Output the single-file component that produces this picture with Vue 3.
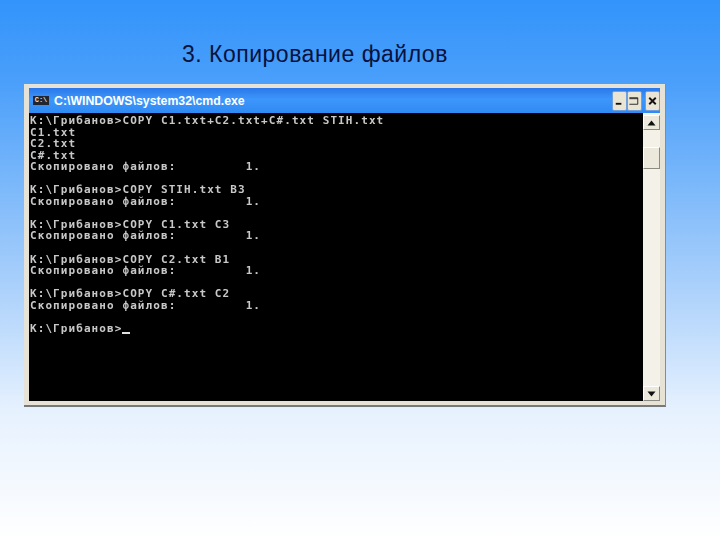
<script setup>
const prompt = 'K:\\Грибанов>'
const done = 'Скопировано файлов:         1.'
const lines = [
  prompt + 'COPY C1.txt+C2.txt+C#.txt STIH.txt',
  'C1.txt', 'C2.txt', 'C#.txt', done, '',
  prompt + 'COPY STIH.txt B3', done, '',
  prompt + 'COPY C1.txt C3', done, '',
  prompt + 'COPY C2.txt B1', done, '',
  prompt + 'COPY C#.txt C2', done, '',
]
</script>

<template>
  <div class="slide">
    <h1 class="heading">3. Копирование файлов</h1>
    <div class="window">
      <div class="titlebar">
        <span class="appicon">C:\</span>
        <span class="wintitle">C:\WINDOWS\system32\cmd.exe</span>
        <div class="controls">
          <button class="ctl">
            <svg width="14" height="14" viewBox="0 0 14 14"><rect x="3" y="9" width="6" height="2" fill="#111" /></svg>
          </button>
          <button class="ctl">
            <svg width="14" height="14" viewBox="0 0 14 14"><path d="M1.5 3.5H10.5V10.5H1.5M1.5 4.5H10.5" fill="none" stroke="#222" stroke-width="1" /></svg>
          </button>
          <button class="ctl close">
            <svg width="14" height="14" viewBox="0 0 14 14"><path d="M3.5 3.5L10.5 10.5M10.5 3.5L3.5 10.5" fill="none" stroke="#111" stroke-width="2" /></svg>
          </button>
        </div>
      </div>
      <div class="client">
        <pre class="console"><template v-for="(l, i) in lines" :key="i">{{ l }}
</template>{{ prompt }}<span class="cursor"></span></pre>
        <div class="scrollbar">
          <div class="arrow">
            <svg width="9" height="6" viewBox="0 0 9 6"><path d="M4.5 0.5L8.5 5.5H0.5Z" fill="#111" /></svg>
          </div>
          <div class="track">
            <div class="thumb"></div>
          </div>
          <div class="arrow">
            <svg width="9" height="6" viewBox="0 0 9 6"><path d="M4.5 5.5L8.5 0.5H0.5Z" fill="#111" /></svg>
          </div>
        </div>
      </div>
    </div>
  </div>
</template>

<style>
html, body { margin: 0; padding: 0; }
</style>

<style scoped>
.slide {
  width: 720px;
  height: 540px;
  box-sizing: border-box;
  overflow: hidden;
  padding: 41px 54px 0 24px;
  background: linear-gradient(180deg, #3394fb 0%, #4a9ffa 15%, #a8cffb 52%, #e6f1fe 76%, #ffffff 100%);
}
.heading {
  margin: 0 0 17px 158px;
  font: 400 23px/26px "Liberation Sans", Arial, sans-serif;
  letter-spacing: 0.5px;
  color: #08123f;
}
.window {
  width: 642px;
  height: 323px;
  box-sizing: border-box;
  display: flex;
  flex-direction: column;
  padding: 4px 5px 4px 5px;
  background: #e6e3d6;
  border-right: 1px solid #8a8a86;
  border-bottom: 2px solid #77787a;
}
.titlebar {
  height: 25px;
  flex: none;
  display: flex;
  align-items: center;
  padding-left: 4px;
  background: linear-gradient(180deg, #2a78ea 0%, #3d96fa 45%, #2f8af3 100%);
}
.appicon {
  width: 16px;
  height: 9px;
  background: #23262e;
  box-sizing: border-box;
  color: #e4e4e4;
  font: 700 7px/9px "Liberation Mono", monospace;
  text-align: center;
  overflow: hidden;
  margin-right: 5px;
}
.wintitle {
  font: 700 12.3px/16px "Liberation Sans", Arial, sans-serif;
  color: #fff;
  white-space: nowrap;
}
.controls {
  margin-left: auto;
  display: flex;
  align-items: center;
}
.ctl {
  width: 15px;
  height: 20px;
  padding: 0;
  display: flex;
  align-items: center;
  justify-content: center;
  background: #e9e4d4;
  border: 1px solid #6f9fdc;
  border-radius: 2px;
}
.close { margin-left: 3px; }
.client {
  flex: 1;
  min-height: 0;
  display: flex;
}
.console {
  flex: 1;
  margin: 0;
  padding: 2px 0 0 1px;
  overflow: hidden;
  background: #000;
  color: #c8c8c8;
  font: 700 11px/11.55px "DejaVu Sans Mono", monospace;
  letter-spacing: 1.08px;
  filter: blur(0.35px);
}
.cursor {
  display: inline-block;
  width: 8px;
  height: 2px;
  vertical-align: -2px;
  background: #e0e0e0;
}
.scrollbar {
  width: 17px;
  flex: none;
  display: flex;
  flex-direction: column;
  box-sizing: border-box;
  padding-top: 2px;
  background: #f3f1e8;
}
.arrow {
  height: 15px;
  flex: none;
  display: flex;
  align-items: center;
  justify-content: center;
  box-sizing: border-box;
  background: #ece9dc;
  border: 1px solid;
  border-color: #fff #8b8b84 #8b8b84 #fff;
}
.track { flex: 1; padding-top: 17px; }
.thumb {
  height: 22px;
  box-sizing: border-box;
  background: #ece9dc;
  border: 1px solid;
  border-color: #fff #8b8b84 #8b8b84 #fff;
}
</style>
